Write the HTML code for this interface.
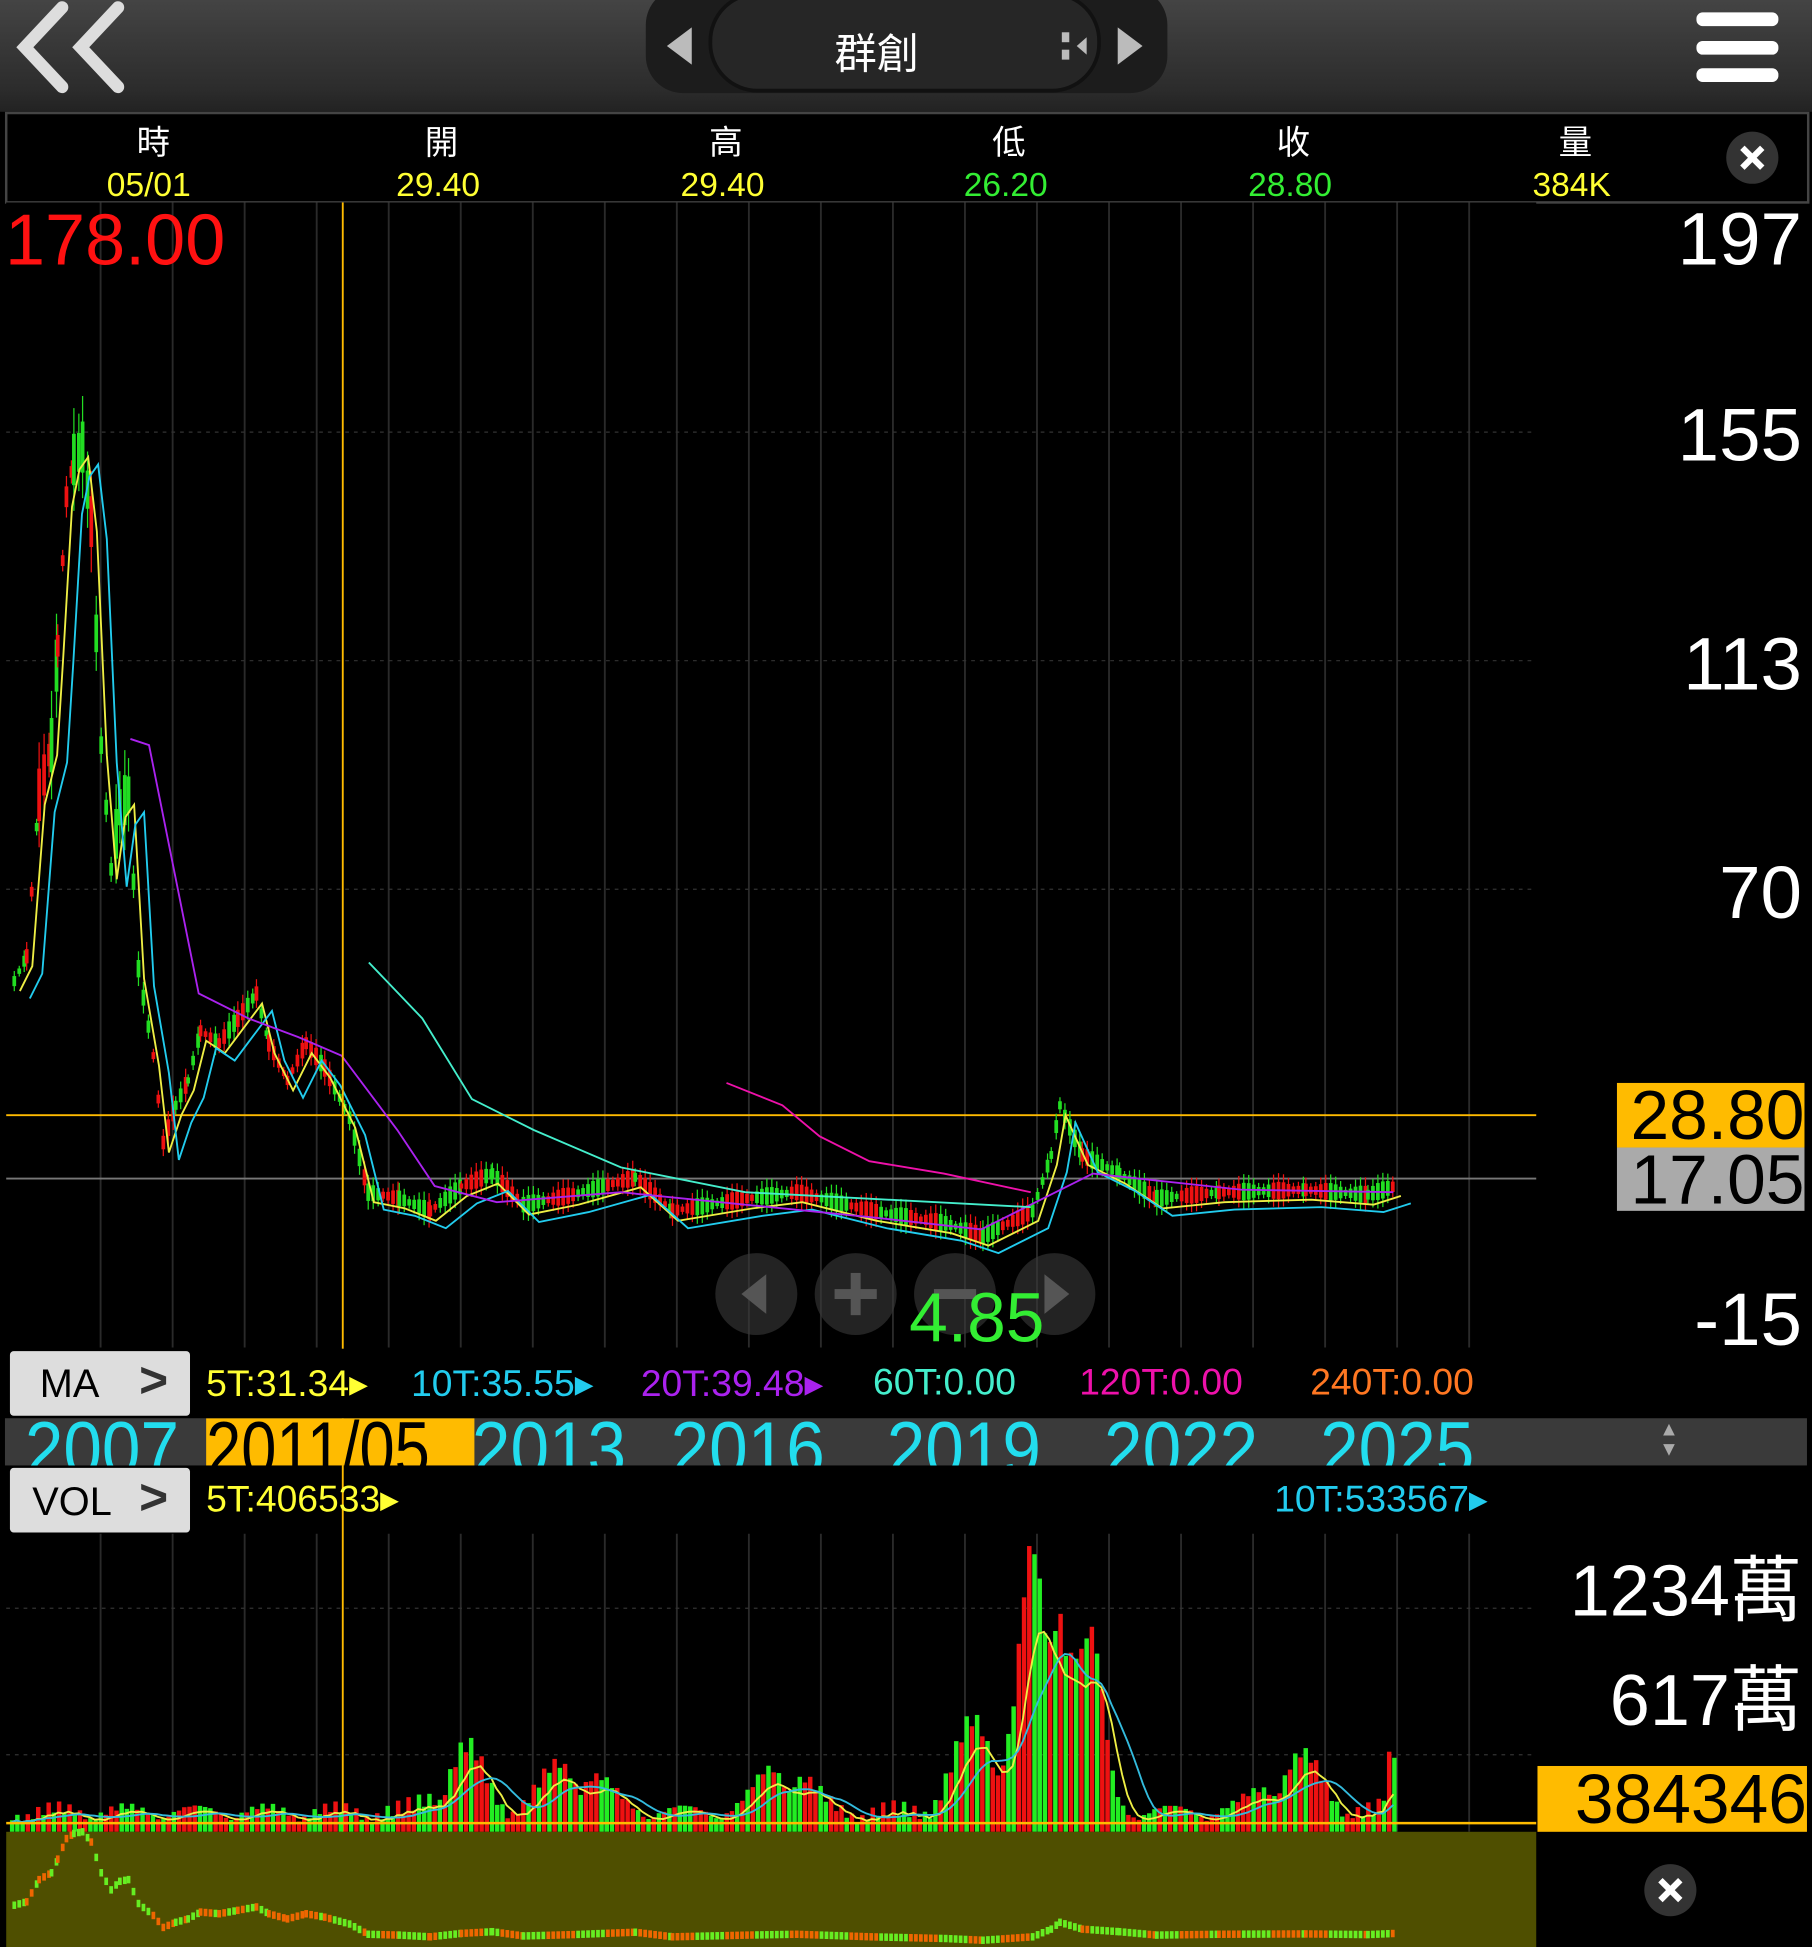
<!DOCTYPE html>
<html><head><meta charset="utf-8"><style>
html,body{margin:0;padding:0;background:#000;overflow:hidden;width:1812px;height:1947px}
#w{position:absolute;left:0;top:0;width:1459px;height:1568px;transform:scale(1.2419);transform-origin:0 0;font-family:"Liberation Sans","Noto Sans CJK TC",sans-serif;background:#000}
.a{position:absolute}
.t{position:absolute;white-space:nowrap}
.y{position:absolute;top:-10px;font-size:62px;color:#2de;transform:scaleX(0.9);transform-origin:0 0}
.m{position:absolute;top:1097px;font-size:30px}
</style></head><body><div id="w">
<div class="a" style="left:0;top:0;width:1459px;height:90px;background:linear-gradient(#444,#2c2c2c 80%,#222)"></div>
<svg class="a" style="left:0;top:0" width="1459" height="90">
<path d="M50 6 L20 38 L50 70" stroke="#ddd" stroke-width="10" fill="none" stroke-linecap="round"/>
<path d="M95 6 L65 38 L95 70" stroke="#ddd" stroke-width="10" fill="none" stroke-linecap="round"/>
<rect x="520" y="-10" width="420" height="85" rx="30" fill="#1c1c1c"/>
<rect x="572" y="-5" width="313" height="78" rx="38" fill="#262626" stroke="#111" stroke-width="3"/>
<path d="M557 22 L537 37 L557 52Z" fill="#bbb"/>
<path d="M900 22 L920 37 L900 52Z" fill="#bbb"/>
<rect x="855" y="26" width="6" height="8" fill="#bbb"/><rect x="855" y="40" width="6" height="8" fill="#bbb"/>
<path d="M875 30 L867 37 L875 44Z" fill="#bbb"/>
<rect x="1366" y="10" width="66" height="11" rx="5" fill="#fff"/>
<rect x="1366" y="33" width="66" height="11" rx="5" fill="#fff"/>
<rect x="1366" y="55" width="66" height="11" rx="5" fill="#fff"/>
</svg>
<div class="t" style="left:672px;top:16px;font-size:34px;color:#fff">群創</div>
<div class="a" style="left:4px;top:90px;width:1449px;height:70px;border:2px solid #444;background:#000"></div>
<div class="t" style="left:0;top:98px;width:1459px;font-size:27px;line-height:34px">
<span class="t" style="left:110px;color:#fff">時</span><span class="t" style="left:86px;top:34px;color:#ff3">05/01</span>
<span class="t" style="left:342px;color:#fff">開</span><span class="t" style="left:319px;top:34px;color:#ff3">29.40</span>
<span class="t" style="left:571px;color:#fff">高</span><span class="t" style="left:548px;top:34px;color:#ff3">29.40</span>
<span class="t" style="left:799px;color:#fff">低</span><span class="t" style="left:776px;top:34px;color:#3e3">26.20</span>
<span class="t" style="left:1028px;color:#fff">收</span><span class="t" style="left:1005px;top:34px;color:#3e3">28.80</span>
<span class="t" style="left:1255px;color:#fff">量</span><span class="t" style="left:1234px;top:34px;color:#ff3">384K</span>
</div>
<svg class="a" style="left:1389px;top:105px" width="44" height="44"><circle cx="22" cy="22" r="21" fill="#333"/><path d="M14 14L30 30M30 14L14 30" stroke="#fff" stroke-width="5"/></svg>
<svg class="a" style="left:0;top:163px" width="1459" height="1405" id="ch"></svg>
<div class="t" style="left:4px;top:160px;font-size:58px;color:#f11">178.00</div>
<div class="t" style="right:8px;top:158px;font-size:60px;color:#fff">197</div>
<div class="t" style="right:8px;top:316px;font-size:60px;color:#fff">155</div>
<div class="t" style="right:8px;top:500px;font-size:60px;color:#fff">113</div>
<div class="t" style="right:8px;top:684px;font-size:60px;color:#fff">70</div>
<div class="t" style="right:8px;top:1028px;font-size:60px;color:#fff">-15</div>
<div class="t" style="left:1302px;top:872px;width:151px;height:52px;background:#fb0;font-size:56px;line-height:52px;color:#000;text-align:right">28.80</div>
<div class="t" style="left:1302px;top:924px;width:151px;height:51px;background:#aaa;font-size:56px;line-height:51px;color:#000;text-align:right">17.05</div>
<div class="t" style="left:732px;top:1028px;font-size:56px;color:#3e3">4.85</div>
<div class="a" style="left:4px;top:1086px;width:1234px;height:56px;background:#000"></div>
<div class="a" style="left:8px;top:1088px;width:145px;height:52px;background:#ddd;border-radius:3px"></div>
<div class="t" style="left:32px;top:1096px;font-size:32px;color:#000">MA</div>
<div class="t" style="left:112px;top:1090px;font-size:40px;color:#333;font-weight:bold">&gt;</div>
<div class="m" style="left:166px;color:#ff3">5T:31.34▸</div>
<div class="m" style="left:331px;color:#2ce">10T:35.55▸</div>
<div class="m" style="left:516px;color:#a2e">20T:39.48▸</div>
<div class="m" style="left:703px;color:#4ec">60T:0.00</div>
<div class="m" style="left:869px;color:#e1a">120T:0.00</div>
<div class="m" style="left:1055px;color:#f72">240T:0.00</div>
<div class="a" style="left:4px;top:1142px;width:1451px;height:38px;background:#3a3a3a;overflow:hidden">
<div class="a" style="left:162px;top:0;width:216px;height:38px;background:#fb0"></div>
<div class="y" style="left:16px">2007</div>
<div class="y" style="left:162px;color:#000;transform:scaleX(0.82)">2011/05</div>
<div class="y" style="left:376px">2013</div>
<div class="y" style="left:536px">2016</div>
<div class="y" style="left:710px">2019</div>
<div class="y" style="left:885px">2022</div>
<div class="y" style="left:1059px">2025</div>
<div class="t" style="left:1332px;top:2px;font-size:16px;color:#aaa;line-height:16px">▲<br>▼</div>
</div>
<div class="a" style="left:8px;top:1182px;width:145px;height:52px;background:#ddd;border-radius:3px"></div>
<div class="t" style="left:26px;top:1191px;font-size:32px;color:#000">VOL</div>
<div class="t" style="left:112px;top:1184px;font-size:40px;color:#333;font-weight:bold">&gt;</div>
<div class="t" style="left:166px;top:1190px;font-size:30px;color:#ff3">5T:406533▸</div>
<div class="t" style="left:1026px;top:1190px;font-size:30px;color:#2ce">10T:533567▸</div>
<div class="t" style="right:8px;top:1234px;font-size:58px;color:#fff">1234萬</div>
<div class="t" style="right:8px;top:1322px;font-size:58px;color:#fff">617萬</div>
<div class="t" style="left:1238px;top:1422px;width:217px;height:53px;background:#fb0;font-size:56px;line-height:53px;color:#000;text-align:right">384346</div>
<svg class="a" style="left:1323px;top:1500px" width="44" height="44"><circle cx="22" cy="22" r="21" fill="#333"/><path d="M14 14L30 30M30 14L14 30" stroke="#fff" stroke-width="5"/></svg>
</div>
<script>
var s=document.getElementById('ch'),h='',o=163;
function Y(y){return y-o}
h+='<rect x="5" y="0" width="1232" height="922" fill="#000"/>';
for(var x=81;x<1237;x+=58)h+='<line x1="'+x+'" y1="0" x2="'+x+'" y2="922" stroke="#2a2a2a" stroke-width="1.5"/><line x1="'+x+'" y1="1072" x2="'+x+'" y2="1312" stroke="#2a2a2a" stroke-width="1.5"/>';
[348,532,716].forEach(function(y){h+='<line x1="5" y1="'+Y(y)+'" x2="1237" y2="'+Y(y)+'" stroke="#333" stroke-dasharray="3 4"/>'});
[1295,1413].forEach(function(y){h+='<line x1="5" y1="'+Y(y)+'" x2="1237" y2="'+Y(y)+'" stroke="#333" stroke-dasharray="3 4"/>'});
h+='<line x1="5" y1="'+Y(949)+'" x2="1237" y2="'+Y(949)+'" stroke="#777" stroke-width="1.5"/>';
h+='<line x1="5" y1="'+Y(898)+'" x2="1237" y2="'+Y(898)+'" stroke="#fb0" stroke-width="1.5"/>';
var P=[[10,790],[20,770],[30,640],[40,600],[45,520],[52,400],[58,370],[65,360],[72,420],[80,600],[88,700],[95,650],[102,640],[110,780],[122,850],[130,920],[140,890],[150,870],[160,830],[175,840],[190,820],[205,800],[215,840],[230,870],[245,840],[260,860],[280,900],[295,960],[320,965],[345,975],[370,955],[395,945],[420,970],[460,962],[510,948],[540,975],[600,965],[640,960],[700,975],[760,985],[790,995],[830,975],[845,930],[852,890],[870,930],[900,945],[930,965],[980,960],[1050,958],[1100,962],[1122,955]];
function poly(pts,c,w,dx,dy){return '<polyline points="'+pts.map(function(p){return (p[0]+(dx||0))+','+Y(p[1]+(dy||0))}).join(' ')+'" fill="none" stroke="'+c+'" stroke-width="'+w+'"/>'}
for(var i=0;i<P.length-1;i++){var a=P[i],b=P[i+1];for(var x=a[0];x<b[0];x+=4){var y=a[1]+(b[1]-a[1])*(x-a[0])/(b[0]-a[0]);var r=(Math.sin(x*1.7)>0);var ht=4+Math.abs(Math.sin(x*0.9))*(y<700?40:10);h+='<line x1="'+(x+1.5)+'" y1="'+Y(y-ht)+'" x2="'+(x+1.5)+'" y2="'+Y(y+ht)+'" stroke="'+(r?'#e11':'#2d2')+'" stroke-width="1"/><rect x="'+x+'" y="'+Y(y-ht/2)+'" width="3" height="'+ht+'" fill="'+(r?'#e11':'#2d2')+'"/>'}}
h+=poly(P,'#ee4',1.5,6,8);
h+=poly(P,'#2ce',1.5,14,14);
h+=poly([[105,595],[120,600],[160,800],[200,820],[240,835],[275,850],[320,910],[350,955],[400,968],[500,960],[600,970],[700,980],[790,990],[840,965],[880,945],[1000,958],[1122,960]],'#a2e',1.5);
h+=poly([[297,775],[340,820],[380,885],[430,910],[500,940],[600,960],[830,972]],'#4ec',1.5);
h+=poly([[585,872],[630,890],[660,915],[700,935],[760,945],[830,960]],'#e1a',1.5);
h+='<line x1="276" y1="0" x2="276" y2="1312" stroke="#fb0" stroke-width="1.5"/>';
[609,689,769,849].forEach(function(x,i){h+='<circle cx="'+x+'" cy="'+Y(1042)+'" r="33" fill="#3a3a3a" opacity="0.6"/>'});
h+='<path d="M617 '+Y(1026)+' L597 '+Y(1042)+' L617 '+Y(1058)+'Z" fill="#555"/><rect x="672" y="'+Y(1038)+'" width="34" height="8" fill="#555"/><rect x="685" y="'+Y(1025)+'" width="8" height="34" fill="#555"/><rect x="752" y="'+Y(1038)+'" width="34" height="8" fill="#555"/><path d="M841 '+Y(1026)+' L861 '+Y(1042)+' L841 '+Y(1058)+'Z" fill="#555"/>';
var v='',ma=[];
for(var x=8;x<1124;x+=4.2){var base=8+Math.abs(Math.sin(x*0.37))*10;
var bump=function(c,w,a){return a*Math.exp(-Math.pow((x-c)/w,2))};
var hh=base+bump(370,25,40)+bump(460,30,35)+bump(630,25,35)+bump(790,30,60)+bump(830,15,140)+bump(855,10,180)+bump(875,15,110)+bump(1040,30,35)+bump(1120,6,40);
hh*=0.6+0.8*Math.abs(Math.sin(x*2.3));
var r=Math.sin(x*0.71+Math.cos(x))>0;
v+='<rect x="'+x.toFixed(1)+'" y="'+(Y(1475)-hh).toFixed(1)+'" width="3.6" height="'+hh.toFixed(1)+'" fill="'+(r?'#e11':'#2e2')+'"/>';
ma.push([x,hh])}
h+=v;
function sm(n){var o2=[];for(var i=0;i<ma.length;i++){var s2=0,c=0;for(var j=Math.max(0,i-n);j<=i;j++){s2+=ma[j][1];c++}o2.push((ma[i][0]+1).toFixed(1)+','+(Y(1475)-s2/c*0.8).toFixed(1))}return o2.join(' ')}
h+='<polyline points="'+sm(4)+'" fill="none" stroke="#ee4" stroke-width="1.5"/>';
h+='<polyline points="'+sm(9)+'" fill="none" stroke="#3bd" stroke-width="1.5"/>';
h+='<line x1="5" y1="'+Y(1468)+'" x2="1237" y2="'+Y(1468)+'" stroke="#fb0" stroke-width="2"/>';
h+='<rect x="5" y="'+Y(1475)+'" width="1232" height="93" fill="#4f4f00"/>';
var m=P.map(function(p){return [p[0],1475+(p[1]-360)/(1000-360)*88]});
for(var i=0;i<m.length-1;i++){var a=m[i],b=m[i+1];for(var x=a[0];x<b[0];x+=4){var y=a[1]+(b[1]-a[1])*(x-a[0])/(b[0]-a[0]);var r=Math.sin(x*1.7)>0;h+='<rect x="'+x+'" y="'+Y(y-3)+'" width="3" height="6" fill="'+(r?'#e60':'#6e2')+'"/>'}}
s.innerHTML=h;
</script>
</body></html>
